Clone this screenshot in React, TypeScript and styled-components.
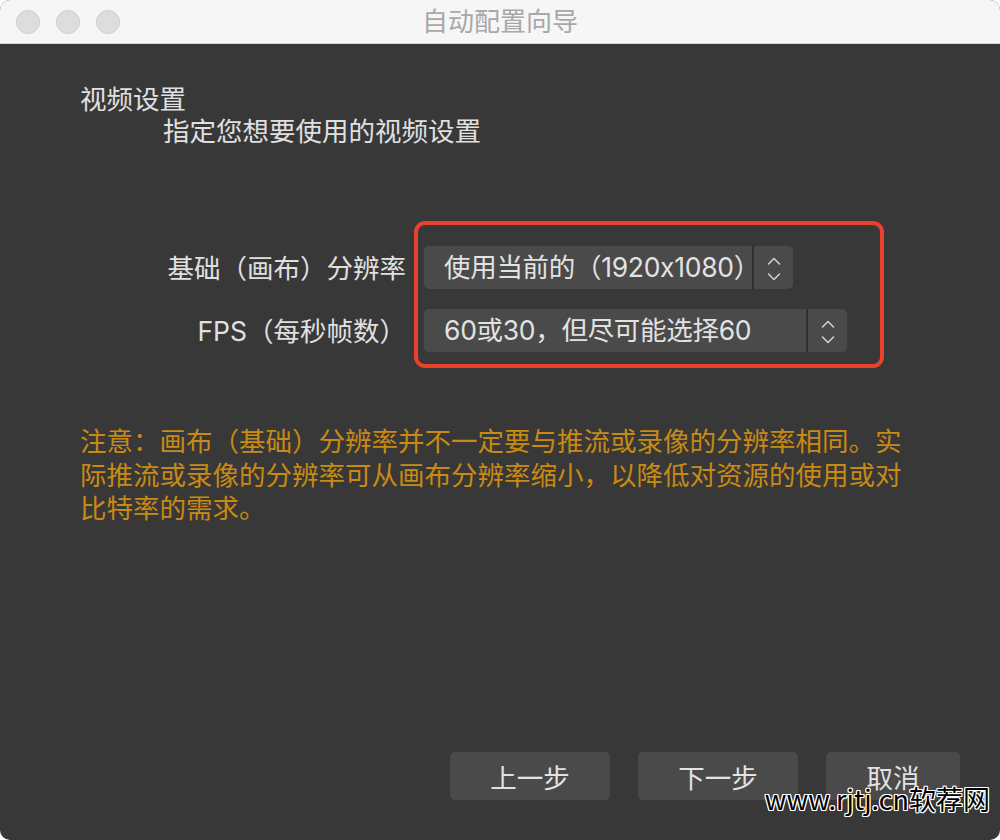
import React from "react";
import styled, { createGlobalStyle } from "styled-components";

const GlobalStyle = createGlobalStyle`
  html, body {
    margin: 0;
    padding: 0;
    background: #ffffff;
  }
  body {
    font-family: Inter, "Noto Sans CJK SC", "Noto Sans", sans-serif;
  }
`;

const Window = styled.div`
  position: relative;
  width: 1000px;
  height: 840px;
  display: flex;
  flex-direction: column;
  background: #383838;
  border-radius: 10px;
  overflow: hidden;
`;

const TitleBar = styled.div`
  flex-shrink: 0;
  height: 43px;
  display: grid;
  grid-template-columns: 1fr auto 1fr;
  align-items: center;
  background: #f6f6f6;
  border-bottom: 1px solid #d4d4d4;
`;

const Lights = styled.div`
  display: flex;
  gap: 16px;
  padding-left: 16px;
`;

const Light = styled.span`
  width: 22px;
  height: 22px;
  border-radius: 50%;
  background: #dddddd;
  border: 1px solid #cdcdcd;
`;

const Title = styled.div`
  font-size: 26px;
  line-height: 43px;
  color: #a8a8a8;
`;

const Content = styled.div`
  flex: 1;
  display: flex;
  flex-direction: column;
  padding: 39px 0 40px 80px;
  color: #e0e0e0;
  font-size: 26.5px;
`;

const Heading = styled.div`
  line-height: 32px;
`;

const Subheading = styled.div`
  line-height: 32px;
  margin-left: 83px;
`;

const Form = styled.div`
  display: flex;
  margin-top: 74px;
`;

const Labels = styled.div`
  width: 326px;
  margin-right: 8px;
  padding-top: 25px;
  display: flex;
  flex-direction: column;
  gap: 20px;
`;

const Label = styled.div`
  height: 43px;
  line-height: 44px;
  text-align: right;
  white-space: nowrap;
`;

const Highlight = styled.div`
  display: flex;
  flex-direction: column;
  align-items: flex-start;
  gap: 20px;
  padding: 21px 33px 12px 6px;
  border: 4px solid #e8412c;
  border-radius: 11px;
`;

const Select = styled.div`
  display: flex;
  height: 43px;
  background: #4a4a4a;
  border-radius: 5px;
  overflow: hidden;
`;

const SelectValue = styled.div<{ $width: number }>`
  width: ${(p) => p.$width}px;
  box-sizing: border-box;
  padding-left: 20px;
  line-height: 43px;
  letter-spacing: -0.3px;
  white-space: nowrap;
  border-right: 2px solid #2f2f2f;
  color: #e2e2e2;
`;

const Stepper = styled.div`
  width: 39px;
  display: flex;
  align-items: center;
  justify-content: center;
  padding-top: 2px;
  box-sizing: border-box;
`;

const Note = styled.p`
  margin: 57px 0 0 0;
  width: 830px;
  color: #c98a12;
  line-height: 33.5px;
`;

const Footer = styled.div`
  margin-top: auto;
  display: flex;
  justify-content: flex-end;
  gap: 28px;
  padding-right: 40px;
`;

const Button = styled.button<{ $width: number }>`
  width: ${(p) => p.$width}px;
  height: 48px;
  border: none;
  border-radius: 5px;
  background: #4a4a4a;
  color: #e2e2e2;
  font-family: inherit;
  font-size: 26.5px;
  padding: 0;
`;

const Watermark = styled.div`
  position: absolute;
  right: 10px;
  bottom: 24px;
  font-family: "Noto Sans CJK SC", sans-serif;
  font-size: 27px;
  line-height: 34px;
  color: #000000;
  text-shadow: 1px 0 0 #fff, -1px 0 0 #fff, 0 1px 0 #fff, 0 -1px 0 #fff,
    1px 1px 0 #fff, -1px -1px 0 #fff, 1px -1px 0 #fff, -1px 1px 0 #fff;
  white-space: nowrap;
`;

const Chevrons = () => (
  <svg width="14" height="24" viewBox="0 0 14 24" fill="none">
    <path d="M1.5 7 L7 1.5 L12.5 7" stroke="#cfcfcf" strokeWidth="1.6" strokeLinecap="round" strokeLinejoin="round" />
    <path d="M1.5 17 L7 22.5 L12.5 17" stroke="#cfcfcf" strokeWidth="1.6" strokeLinecap="round" strokeLinejoin="round" />
  </svg>
);

export default function App() {
  return (
    <>
      <GlobalStyle />
      <Window>
        <TitleBar>
          <Lights>
            <Light />
            <Light />
            <Light />
          </Lights>
          <Title>自动配置向导</Title>
          <div />
        </TitleBar>
        <Content>
          <Heading>视频设置</Heading>
          <Subheading>指定您想要使用的视频设置</Subheading>
          <Form>
            <Labels>
              <Label>基础（画布）分辨率</Label>
              <Label>FPS（每秒帧数）</Label>
            </Labels>
            <Highlight>
              <Select>
                <SelectValue $width={330}>使用当前的（1920x1080）</SelectValue>
                <Stepper>
                  <Chevrons />
                </Stepper>
              </Select>
              <Select>
                <SelectValue $width={384}>60或30，但尽可能选择60</SelectValue>
                <Stepper>
                  <Chevrons />
                </Stepper>
              </Select>
            </Highlight>
          </Form>
          <Note>
            注意：画布（基础）分辨率并不一定要与推流或录像的分辨率相同。实际推流或录像的分辨率可从画布分辨率缩小，以降低对资源的使用或对比特率的需求。
          </Note>
          <Footer>
            <Button $width={160}>上一步</Button>
            <Button $width={160}>下一步</Button>
            <Button $width={134}>取消</Button>
          </Footer>
        </Content>
        <Watermark>www.rjtj.cn软荐网</Watermark>
      </Window>
    </>
  );
}
